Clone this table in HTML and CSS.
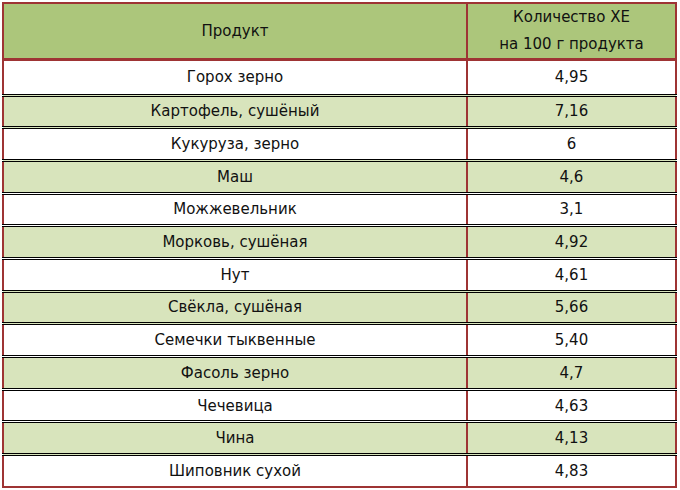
FILE: index.html
```html
<!DOCTYPE html>
<html lang="ru">
<head>
<meta charset="utf-8">
<link rel="stylesheet" href="styles.css">
</head>
<body>
<table class="xe">
  <thead>
    <tr><th class="c1">Продукт</th><th class="c2">Количество ХЕ<br>на 100 г продукта</th></tr>
  </thead>
  <tbody>
    <tr><td>Горох зерно</td><td>4,95</td></tr>
    <tr class="alt"><td>Картофель, сушёный</td><td>7,16</td></tr>
    <tr><td>Кукуруза, зерно</td><td>6</td></tr>
    <tr class="alt"><td>Маш</td><td>4,6</td></tr>
    <tr><td>Можжевельник</td><td>3,1</td></tr>
    <tr class="alt"><td>Морковь, сушёная</td><td>4,92</td></tr>
    <tr><td>Нут</td><td>4,61</td></tr>
    <tr class="alt"><td>Свёкла, сушёная</td><td>5,66</td></tr>
    <tr><td>Семечки тыквенные</td><td>5,40</td></tr>
    <tr class="alt"><td>Фасоль зерно</td><td>4,7</td></tr>
    <tr><td>Чечевица</td><td>4,63</td></tr>
    <tr class="alt"><td>Чина</td><td>4,13</td></tr>
    <tr><td>Шиповник сухой</td><td>4,83</td></tr>
  </tbody>
</table>
</body>
</html>
```
FILE: styles.css
```css
html, body { background: #ffffff; }
body {
  margin: 2px 3px 0 2px;
  font-family: "DejaVu Sans", Verdana, sans-serif;
  font-size: 15px;
  color: #111111;
}
.xe {
  width: 675px;
  border-collapse: collapse;
  border: 2px solid #9e3434;
}
.xe th {
  background: #acc67b;
  font-weight: normal;
  height: 54px;
  line-height: 27px;
  padding: 0;
  text-align: center;
  border-bottom: 3px solid #9e3434;
}
.xe .c1 { width: 462px; border-right: 2px solid #9e3434; }
.xe td {
  height: 29.7px;
  padding: 0;
  text-align: center;
  border-top: 3px double #000;
}
.xe td:first-child { border-right: 2px solid #9e3434; }
.xe tbody tr:first-child td { border-top: none; height: 32.5px; }
.xe tr.alt td { background: #d8e4bc; }
```
